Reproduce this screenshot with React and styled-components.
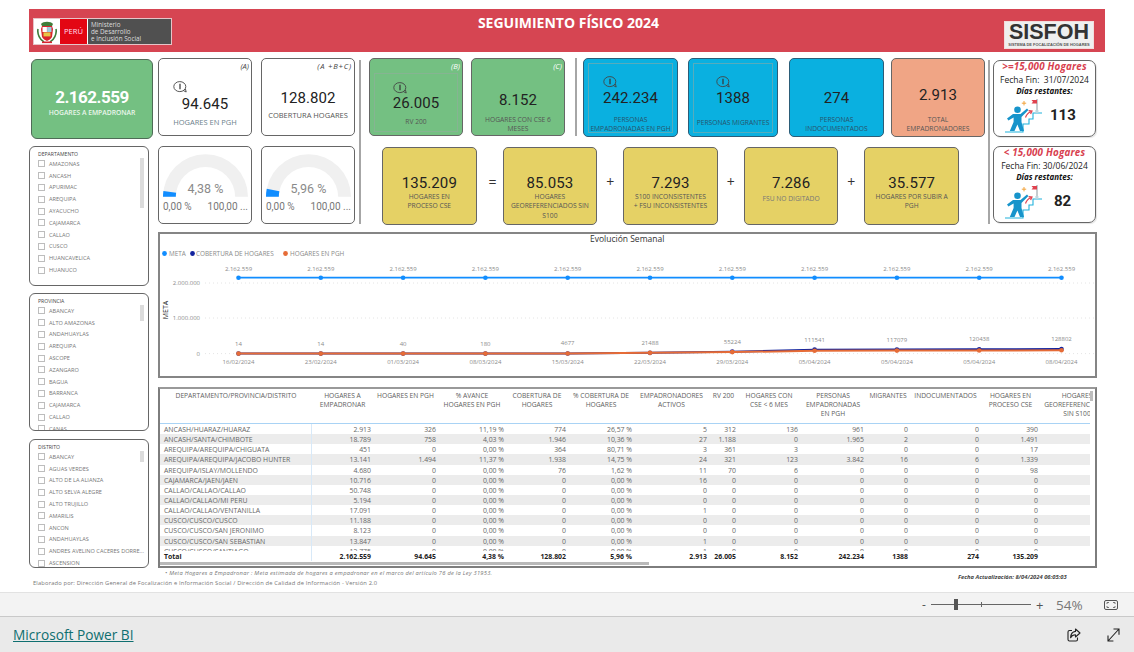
import React from "react";
import styled, { createGlobalStyle } from "styled-components";

const SANS = `"Open Sans", "Liberation Sans", sans-serif`;
const NUM = `Roboto, "Liberation Sans", sans-serif`;

const GlobalStyle = createGlobalStyle`
  html, body {
    margin: 0;
    padding: 0;
    background: #fff;
    font-family: ${SANS};
    overflow: hidden;
  }
`;

const departamentos = ["AMAZONAS", "ANCASH", "APURIMAC", "AREQUIPA", "AYACUCHO", "CAJAMARCA", "CALLAO", "CUSCO", "HUANCAVELICA", "HUANUCO"];
const provincias = ["ABANCAY", "ALTO AMAZONAS", "ANDAHUAYLAS", "AREQUIPA", "ASCOPE", "AZANGARO", "BAGUA", "BARRANCA", "CAJAMARCA", "CALLAO", "CANAS"];
const distritos = ["ABANCAY", "AGUAS VERDES", "ALTO DE LA ALIANZA", "ALTO SELVA ALEGRE", "ALTO TRUJILLO", "AMARILIS", "ANCON", "ANDAHUAYLAS", "ANDRES AVELINO CACERES DORRE...", "ASCENSION"];

const columns = [
  "DEPARTAMENTO/PROVINCIA/DISTRITO",
  "HOGARES A\nEMPADRONAR",
  "HOGARES EN PGH",
  "% AVANCE\nHOGARES EN PGH",
  "COBERTURA DE\nHOGARES",
  "% COBERTURA DE\nHOGARES",
  "EMPADRONADORES\nACTIVOS",
  "RV 200",
  "HOGARES CON\nCSE < 6 MES",
  "PERSONAS\nEMPADRONADAS\nEN PGH",
  "MIGRANTES",
  "INDOCUMENTADOS",
  "HOGARES EN\nPROCESO CSE",
  "HOGARES\nGEOREFERENCIADOS\nSIN S100",
];

const zeroRow = (name, hogares, activos) => [name, hogares, "0", "0,00 %", "0", "0,00 %", activos, "0", "0", "0", "0", "0", "0", "0"];

const rows = [
  ["ANCASH/HUARAZ/HUARAZ", "2.913", "326", "11,19 %", "774", "26,57 %", "5", "312", "136", "961", "0", "0", "390", "0"],
  ["ANCASH/SANTA/CHIMBOTE", "18.789", "758", "4,03 %", "1.946", "10,36 %", "27", "1.188", "0", "1.965", "2", "0", "1.491", "0"],
  ["AREQUIPA/AREQUIPA/CHIGUATA", "451", "0", "0,00 %", "364", "80,71 %", "3", "361", "3", "0", "0", "0", "17", "0"],
  ["AREQUIPA/AREQUIPA/JACOBO HUNTER", "13.141", "1.494", "11,37 %", "1.938", "14,75 %", "24", "321", "123", "3.842", "16", "6", "1.339", "0"],
  ["AREQUIPA/ISLAY/MOLLENDO", "4.680", "0", "0,00 %", "76", "1,62 %", "11", "70", "6", "0", "0", "0", "98", "0"],
  zeroRow("CAJAMARCA/JAEN/JAEN", "10.716", "16"),
  zeroRow("CALLAO/CALLAO/CALLAO", "50.748", "0"),
  zeroRow("CALLAO/CALLAO/MI PERU", "5.194", "0"),
  zeroRow("CALLAO/CALLAO/VENTANILLA", "17.091", "1"),
  zeroRow("CUSCO/CUSCO/CUSCO", "11.188", "0"),
  zeroRow("CUSCO/CUSCO/SAN JERONIMO", "8.123", "0"),
  zeroRow("CUSCO/CUSCO/SAN SEBASTIAN", "13.847", "1"),
  zeroRow("CUSCO/CUSCO/SANTIAGO", "12.775", "1"),
];

const totals = ["Total", "2.162.559", "94.645", "4,38 %", "128.802", "5,96 %", "2.913", "26.005", "8.152", "242.234", "1388", "274", "135.209", "85.053"];

const TRACKS = "152px 61px 65px 68px 62px 66px 75px 29px 62px 66px 44px 71px 59px 74px";

const dates = ["16/02/2024", "23/02/2024", "01/03/2024", "08/03/2024", "15/03/2024", "22/03/2024", "29/03/2024", "05/04/2024", "05/04/2024", "05/04/2024", "08/04/2024"];
const cobertura = [14, 14, 40, 180, 4677, 21488, 55224, 111541, 117079, 120438, 128802];
const pgh = [14, 14, 40, 180, 4677, 21000, 42000, 80000, 85000, 88000, 94645];
const labelY = [344, 344, 344, 344, 343, 343, 342, 340, 340, 339, 339];

const xAt = (i) => 238.5 + i * 82.3;
const yAt = (v) => 353.6 - (v / 1000000) * 35.3;
const line = (values) => values.map((v, i) => `${xAt(i)},${yAt(v)}`).join(" ");

const arc = (pct, cx, cy, outer, inner) => {
  const a = Math.PI * pct;
  const px = (r) => (cx - r * Math.cos(a)).toFixed(2);
  const py = (r) => (cy - r * Math.sin(a)).toFixed(2);
  return `M${cx - outer} ${cy} A${outer} ${outer} 0 0 1 ${px(outer)} ${py(outer)} L${px(inner)} ${py(inner)} A${inner} ${inner} 0 0 0 ${cx - inner} ${cy} Z`;
};

const InfoIcon = () => (
  <svg width="14" height="12" viewBox="0 0 14 12" fill="none">
    <ellipse cx="6.8" cy="5.6" rx="6" ry="5" stroke="#444" strokeWidth="0.9" />
    <path d="M10.4 9.6L13.2 11L12.4 7.8" stroke="#444" strokeWidth="0.9" strokeLinejoin="round" />
    <path d="M7 2.8V8.2" stroke="#333" strokeWidth="1.2" />
  </svg>
);

const CoatOfArms = () => (
  <svg width="20" height="24" viewBox="0 0 20 24">
    <path d="M4 4c2-3 10-3 12 0l-1 2H5z" fill="#3f7d3a" />
    <path d="M5 6h10l1 3-1 8c-1 2-3 3-5 4-2-1-4-2-5-4L4 9z" fill="#d9232e" />
    <rect x="5.5" y="7" width="4.4" height="5" fill="#fff" />
    <rect x="10.1" y="7" width="4.4" height="5" fill="#9ccfe0" />
    <rect x="6.5" y="12.4" width="7" height="4" fill="#e8c547" />
    <path d="M1 9c-1 5 2 11 6 13M19 9c1 5-2 11-6 13" stroke="#3f7d3a" strokeWidth="1.6" fill="none" />
    <rect x="5" y="21.5" width="10" height="1.6" fill="#d9232e" />
  </svg>
);

const GoalIcon = () => (
  <svg width="37" height="34" viewBox="0 0 37 34" fill="none">
    <path d="M0 33H18V25H24V20H28V14H37" stroke="#21b2dc" strokeWidth="1.1" />
    <path d="M32 0V13" stroke="#7f8c95" strokeWidth="0.9" />
    <rect x="30.4" y="11" width="3" height="3" fill="#bcd7e0" />
    <path d="M26.5 1H32V4.5H26.5L28 2.8Z" fill="#e0424f" />
    <path d="M19 2V6.4M16.8 4.2H21.2" stroke="#f2a33a" strokeWidth="1" />
    <path d="M20.5 18.5C21.5 15.5 23.5 13.5 26 12.5M23.6 11.6L27 12L25.6 15" stroke="#e0424f" strokeWidth="1.2" />
    <circle cx="12.5" cy="10.8" r="3.3" fill="#1794cb" />
    <path d="M2 19.5L8 15H15.5L22 9.5L23.4 11L16.5 18V23L19 32H15L12.4 25.4L9.5 32H4.8L8.6 23V18.6L3.4 21.4Z" fill="#1794cb" />
  </svg>
);

const FitIcon = () => (
  <svg width="14" height="10" viewBox="0 0 14 10" fill="none" stroke="#555" strokeWidth="1">
    <rect x="0.5" y="0.5" width="13" height="9" rx="1.5" />
    <path d="M3 4V2.5H5M9 2.5H11V4M11 6V7.5H9M5 7.5H3V6" strokeWidth="0.8" />
  </svg>
);

const ShareIcon = () => (
  <svg width="14" height="14" viewBox="0 0 14 14" fill="none" stroke="#222" strokeWidth="1.1">
    <path d="M5 2.5H2.5A1.5 1.5 0 0 0 1 4v7.5A1.5 1.5 0 0 0 2.5 13H9a1.5 1.5 0 0 0 1.5-1.5V9.5" />
    <path d="M8.5 1L13 5L8.5 9V6.8C6.2 6.8 4.6 7.7 3.6 9.8 3.7 6.5 5.6 3.7 8.5 3.4Z" strokeLinejoin="round" />
  </svg>
);

const ExpandIcon = () => (
  <svg width="13" height="14" viewBox="0 0 13 14" fill="none" stroke="#222" strokeWidth="1.1">
    <path d="M1 13L12 1M6.5 1H12V6.8M1 7.4V13H6.4" />
  </svg>
);

const Page = styled.div`
  width: 1134px;
  height: 652px;
  overflow: hidden;
  display: flex;
  flex-direction: column;
`;

const Report = styled.main`
  height: 583px;
  padding: 9px 0 0 29px;
  position: relative;
`;

const Banner = styled.header`
  width: 1076px;
  height: 43px;
  background: #d64552;
  display: grid;
  grid-template-columns: 1fr auto 1fr;
  align-items: center;
  padding: 0 11px 0 4px;
  box-sizing: border-box;
`;

const BannerTitle = styled.h1`
  margin: 0 0 16px 10px;
  color: #fff;
  font: 700 14px/16px ${SANS};
`;

const MinisterioLogo = styled.div`
  width: 139px;
  height: 27px;
  margin-top: 2px;
  display: flex;
  background: #fff;
  border: 1px solid #e6c4c8;
  box-sizing: border-box;
`;

const ArmsBox = styled.div`
  width: 26px;
  display: flex;
  align-items: center;
  justify-content: center;
`;

const PeruBox = styled.div`
  width: 27px;
  background: #e30613;
  color: #fde;
  font: 400 7.6px/25px ${SANS};
  text-align: center;
`;

const MinisterioBox = styled.div`
  flex: 1;
  margin-left: 1px;
  background: #505050;
  color: #ddd;
  font: 400 6.3px/7.2px ${SANS};
  padding: 2px 0 0 3px;
`;

const SisfohLogo = styled.div`
  justify-self: end;
  align-self: end;
  width: 90px;
  height: 28px;
  margin-bottom: 3px;
  background: #efefef;
  border: 1px solid #f3dcdc;
  box-sizing: border-box;
  text-align: center;
  color: #333;
`;

const SisfohName = styled.div`
  font: 700 21.5px/20px "Liberation Sans", sans-serif;
`;

const SisfohSub = styled.div`
  font: 700 3.9px/6px "Liberation Sans", sans-serif;
  color: #555;
`;

const Dashboard = styled.div`
  display: grid;
  grid-template-columns: 129px 939px;
  margin-top: 6px;
`;

const LeftColumn = styled.aside`
  display: flex;
  flex-direction: column;
`;

const RightColumn = styled.section`
  display: flex;
  flex-direction: column;
`;

const HeroCard = styled.div`
  width: 122px;
  height: 80px;
  margin: 1px 0 7px 2px;
  box-sizing: border-box;
  border: 1px solid #4f6b57;
  border-radius: 6px;
  background: #74c082;
  color: #fff;
  text-align: center;
  padding-top: 27px;
`;

const HeroValue = styled.div`
  font: 700 17px/20px ${NUM};
  letter-spacing: -0.5px;
`;

const HeroLabel = styled.div`
  margin-top: 1px;
  font: 600 6.75px/10px ${SANS};
  color: #eaf6ec;
`;

const Slicer = styled.div`
  width: 120px;
  height: ${(p) => p.$height}px;
  margin-bottom: ${(p) => p.$gap}px;
  box-sizing: border-box;
  border: 1px solid #666;
  border-radius: 6px;
  padding: 4px 0 0 8px;
  position: relative;
  overflow: hidden;
`;

const SlicerTitle = styled.div`
  font: 400 5.1px/7px ${SANS};
  color: #444;
`;

const SlicerList = styled.ul`
  list-style: none;
  margin: 0;
  padding: 0;
`;

const SlicerItem = styled.li`
  height: 11.8px;
  display: flex;
  align-items: center;
  gap: 4px;
  font: 400 5.6px/8px ${SANS};
  color: #777;
  white-space: nowrap;
`;

const Check = styled.span`
  width: 5px;
  height: 5px;
  border: 1px solid #bdbdbd;
  flex: none;
`;

const SlicerBar = styled.div`
  position: absolute;
  left: 110px;
  top: ${(p) => p.$top}px;
  width: 4px;
  height: ${(p) => p.$height}px;
  background: #dcdcdc;
`;

const KpiArea = styled.div`
  display: flex;
  height: 166px;
`;

const SummaryGrid = styled.div`
  display: grid;
  grid-template-columns: 94px 94px;
  grid-auto-rows: 78px;
  column-gap: 9px;
  row-gap: 10px;
`;

const Rule = styled.div`
  width: 2px;
  height: ${(p) => p.$height}px;
  margin: ${(p) => p.$margin};
  background: #a6a6a6;
  flex: none;
`;

const KpiColumn = styled.div`
  width: 616px;
  margin-left: 8px;
`;

const KpiRow = styled.div`
  display: flex;
  align-items: flex-start;
`;

const EquationRow = styled.div`
  display: flex;
  margin-top: 10px;
  padding-left: 13px;
`;

const Card = styled.div`
  position: relative;
  width: ${(p) => p.$width || 94}px;
  height: ${(p) => p.$height || 78}px;
  margin-left: ${(p) => p.$left || 0}px;
  flex: none;
  box-sizing: border-box;
  border: 1px solid ${(p) => p.$border || "#666"};
  border-radius: 5px;
  background: ${(p) => p.$bg || "#fff"};
  padding-top: ${(p) => p.$top || 0}px;
  display: flex;
  flex-direction: column;
  align-items: center;
  text-align: center;
`;

const CardValue = styled.div`
  font: 400 15px/18px ${NUM};
  color: ${(p) => p.$color || "#222"};
  letter-spacing: 0.1px;
`;

const CardLabel = styled.div`
  margin-top: ${(p) => p.$gap || 0}px;
  font: 400 ${(p) => p.$size || 6.7}px/9.3px ${SANS};
  color: ${(p) => p.$color || "#555"};
  white-space: pre-line;
`;

const Tag = styled.span`
  position: absolute;
  top: 3px;
  right: 2px;
  font: italic 400 7.6px/9px ${SANS};
  letter-spacing: ${(p) => p.$spacing || 0}px;
  color: ${(p) => p.$color || "#444"};
`;

const InfoMark = styled.span`
  position: absolute;
  left: ${(p) => p.$left}px;
  top: ${(p) => p.$top}px;
  display: flex;
`;

const Frame = styled.span`
  position: absolute;
  left: 4px;
  right: 4px;
  top: ${(p) => p.$top}px;
  bottom: 3px;
  border: 1px solid rgba(150, 170, 160, 0.55);
`;

const Operator = styled.div`
  width: 26px;
  height: 70px;
  box-sizing: border-box;
  padding-left: ${(p) => p.$shift || 0}px;
  display: flex;
  align-items: center;
  justify-content: center;
  font: 400 14px/16px ${SANS};
  color: #333;
`;

const GaugeCard = styled.div`
  box-sizing: border-box;
  border: 1px solid #666;
  border-radius: 5px;
  padding: 6px 3px 0 4px;
`;

const GaugeDial = styled.div`
  position: relative;
  height: 45px;
  display: flex;
  justify-content: center;
`;

const GaugeValue = styled.div`
  position: absolute;
  left: 0;
  right: 0;
  top: 28px;
  text-align: center;
  font: 400 12.5px/16px ${NUM};
  color: #8a8a8a;
`;

const GaugeScale = styled.div`
  display: flex;
  justify-content: space-between;
  margin-top: 2px;
  font: 400 10px/14px ${NUM};
  color: #777;
  white-space: nowrap;
`;

const DeadlineColumn = styled.div`
  display: flex;
  flex-direction: column;
  gap: 9px;
  margin: 2px 0 0 3px;
`;

const DeadlineCard = styled.div`
  width: 103px;
  height: 77px;
  box-sizing: border-box;
  border: 1px solid #666;
  border-radius: 7px;
  text-align: center;
  box-shadow: 1px 1px 1px #e3e3e3;
`;

const DeadlineTitle = styled.div`
  font: italic 700 9.8px/12px ${SANS};
  color: #d8404f;
  letter-spacing: 0.2px;
  white-space: nowrap;
`;

const DeadlineDate = styled.div`
  font: 400 8.5px/13px ${SANS};
  color: #222;
  white-space: pre;
`;

const DeadlineLeft = styled.div`
  font: italic 700 8px/10px ${SANS};
  color: #111;
`;

const DeadlineFoot = styled.div`
  display: flex;
  align-items: center;
  margin-top: 3px;
  padding-left: 11px;
`;

const DeadlineCount = styled.div`
  font: 700 15px/18px ${NUM};
  color: #222;
  margin: 0 0 2px ${(p) => p.$left}px;
`;

const ChartPanel = styled.figure`
  margin: 8px 0 0;
  height: 146px;
  box-sizing: border-box;
  border: 2px solid #858585;
  display: flex;
`;

const ChartText = styled.text`
  font-family: ${SANS};
  font-size: ${(p) => p.$size || 6}px;
  fill: ${(p) => p.$fill || "#8a8a8a"};
`;

const TablePanel = styled.div`
  margin-top: 9px;
  height: 181px;
  box-sizing: border-box;
  border: 2px solid #7d7d7d;
  border-top-color: #999;
  position: relative;
`;

const TableClip = styled.div`
  width: 930px;
  height: 177px;
  overflow: hidden;
`;

const HeadRow = styled.div`
  display: grid;
  grid-template-columns: ${TRACKS};
  width: 954px;
  height: 34px;
  box-sizing: content-box;
  border-bottom: 1px solid #a9d3f5;
`;

const HeadCell = styled.div`
  padding-top: 1.5px;
  text-align: center;
  font: 400 6.7px/9.4px ${SANS};
  color: #606060;
  white-space: pre;
`;

const TableBody = styled.div`
  height: 127px;
  overflow: hidden;
`;

const DataRow = styled.div`
  display: grid;
  grid-template-columns: ${TRACKS};
  width: 954px;
  height: 10.15px;
  background: ${(p) => (p.$striped ? "#ececec" : "#fff")};
`;

const DataCell = styled.div`
  text-align: ${(p) => (p.$first ? "left" : "right")};
  padding: ${(p) => (p.$first ? "0 0 0 4px" : "0 2px 0 0")};
  font: ${(p) => (p.$bold ? 700 : 400)} 6.9px/11px ${SANS};
  color: ${(p) => (p.$bold ? "#222" : "#666")};
  white-space: nowrap;
  overflow: hidden;
  border-right: ${(p) => (p.$first ? "1px solid #d8e9f8" : "0")};
`;

const VerticalThumb = styled.div`
  position: absolute;
  top: 2px;
  left: 930px;
  width: 3px;
  height: 10px;
  background: #bdbdbd;
`;

const HorizontalThumb = styled.div`
  position: absolute;
  left: 0;
  top: 173px;
  width: 489px;
  height: 3px;
  background: #b9b9b9;
`;

const FootRow = styled.div`
  display: flex;
  align-items: flex-start;
`;

const NoteColumn = styled.div`
  width: 925px;
`;

const Note = styled.div`
  margin-left: ${(p) => p.$left}px;
  margin-top: ${(p) => p.$top}px;
  font: ${(p) => (p.$italic ? "italic" : "normal")} 400 5.75px/8px ${SANS};
  letter-spacing: ${(p) => p.$spacing}px;
  color: #777;
  white-space: nowrap;
`;

const Updated = styled.div`
  margin: 5px 0 0 4px;
  font: italic 700 5.8px/8px ${SANS};
  color: #444;
  white-space: nowrap;
`;

const ZoomBar = styled.div`
  height: 23px;
  flex: none;
  background: #f3f3f3;
  border-top: 1px solid #e2e2e2;
  border-bottom: 1px solid #c9c9c9;
  box-sizing: content-box;
  display: flex;
  align-items: center;
  padding-left: 922px;
`;

const ZoomSign = styled.span`
  width: ${(p) => p.$width}px;
  font: 400 ${(p) => p.$size}px/20px ${SANS};
  color: #555;
`;

const ZoomTrack = styled.div`
  position: relative;
  width: 100px;
  height: 1px;
  margin: 0 5px;
  background: #666;
`;

const ZoomThumb = styled.span`
  position: absolute;
  left: 23px;
  top: -5px;
  width: 4px;
  height: 11px;
  background: #555;
`;

const ZoomTick = styled.span`
  position: absolute;
  left: 50px;
  top: -2px;
  width: 1px;
  height: 5px;
  background: #666;
`;

const ZoomValue = styled.span`
  width: 48px;
  margin-left: 11px;
  font: 400 13.5px/20px ${SANS};
  color: #777;
`;

const BottomBar = styled.footer`
  flex: 1;
  background: #eaeaea;
  display: flex;
  align-items: center;
  padding: 0 14px 0 13px;
  gap: 26px;
`;

const PowerBiLink = styled.a`
  margin-right: auto;
  font: 400 13.7px/20px ${SANS};
  color: #0f6f70;
  text-decoration: underline;
`;

const Logo = () => (
  <MinisterioLogo>
    <ArmsBox>
      <CoatOfArms />
    </ArmsBox>
    <PeruBox>PERÚ</PeruBox>
    <MinisterioBox>
      Ministerio
      <br />
      de Desarrollo
      <br />e Inclusión Social
    </MinisterioBox>
  </MinisterioLogo>
);

const SlicerBox = ({ title, items, height, gap, barTop, barHeight }) => (
  <Slicer $height={height} $gap={gap}>
    <SlicerTitle>{title}</SlicerTitle>
    <SlicerList>
      {items.map((item, i) => (
        <SlicerItem key={i}>
          <Check />
          {item}
        </SlicerItem>
      ))}
    </SlicerList>
    <SlicerBar $top={barTop} $height={barHeight} />
  </Slicer>
);

const Gauge = ({ pct, value }) => (
  <GaugeCard>
    <GaugeDial>
      <svg width="86" height="45" viewBox="0 0 86 45">
        <path d={arc(1, 43, 44, 43, 30)} fill="#f0f0f0" />
        <path d={arc(pct, 43, 44, 43, 30)} fill="#118dff" />
      </svg>
      <GaugeValue>{value}</GaugeValue>
    </GaugeDial>
    <GaugeScale>
      <span>0,00 %</span>
      <span>100,00 ...</span>
    </GaugeScale>
  </GaugeCard>
);

const Deadline = ({ title, date, count, countLeft }) => (
  <DeadlineCard>
    <DeadlineTitle>{title}</DeadlineTitle>
    <DeadlineDate>{date}</DeadlineDate>
    <DeadlineLeft>Días restantes:</DeadlineLeft>
    <DeadlineFoot>
      <GoalIcon />
      <DeadlineCount $left={countLeft}>{count}</DeadlineCount>
    </DeadlineFoot>
  </DeadlineCard>
);

const Chart = () => (
  <svg width="935" height="142" viewBox="160 234 935 142">
    <ChartText x="590" y="241.5" $size={8.5} $fill="#333">Evolución Semanal</ChartText>
    <circle cx="164.5" cy="253.5" r="2.4" fill="#118dff" />
    <ChartText x="169" y="255.5" $size={6.4}>META</ChartText>
    <circle cx="192.5" cy="253.5" r="2.4" fill="#12239e" />
    <ChartText x="196" y="255.5" $size={6.4}>COBERTURA DE HOGARES</ChartText>
    <circle cx="285.5" cy="253.5" r="2.4" fill="#e66c37" />
    <ChartText x="290" y="255.5" $size={6.4}>HOGARES EN PGH</ChartText>

    {[283, 318, 353.6].map((y) => (
      <line key={y} x1="205" x2="1094" y1={y} y2={y} stroke="#ddd" strokeWidth="0.8" strokeDasharray="1 3" />
    ))}
    <ChartText x="200" y="285" textAnchor="end">2.000.000</ChartText>
    <ChartText x="200" y="320" textAnchor="end">1.000.000</ChartText>
    <ChartText x="200" y="356" textAnchor="end">0</ChartText>
    <ChartText x="0" y="0" $size={7} $fill="#222" textAnchor="middle" transform="translate(168 310) rotate(-90)">META</ChartText>

    <polyline points={dates.map((_, i) => `${xAt(i)},277.7`).join(" ")} fill="none" stroke="#118dff" strokeWidth="1.7" />
    {dates.map((d, i) => (
      <g key={i}>
        <circle cx={xAt(i)} cy="277.7" r="2.3" fill="#118dff" />
        <ChartText x={xAt(i)} y="270.6" textAnchor="middle">2.162.559</ChartText>
        <ChartText x={xAt(i)} y={labelY[i] + 2} textAnchor="middle">{cobertura[i]}</ChartText>
        <ChartText x={xAt(i)} y="364" textAnchor="middle">{d}</ChartText>
      </g>
    ))}

    <polyline points={line(cobertura)} fill="none" stroke="#12239e" strokeWidth="2" />
    {cobertura.map((v, i) => (
      <circle key={i} cx={xAt(i)} cy={yAt(v)} r="2.3" fill="#12239e" />
    ))}
    <polyline points={line(pgh)} fill="none" stroke="#e66c37" strokeWidth="2" />
    {pgh.map((v, i) => (
      <circle key={i} cx={xAt(i)} cy={yAt(v)} r="2.3" fill="#e66c37" />
    ))}
  </svg>
);

const DataTable = () => (
  <TablePanel>
    <TableClip>
      <HeadRow>
        {columns.map((c) => (
          <HeadCell key={c}>{c}</HeadCell>
        ))}
      </HeadRow>
      <TableBody>
        {rows.map((row, r) => (
          <DataRow key={r} $striped={r % 2 === 1}>
            {row.map((cell, c) => (
              <DataCell key={c} $first={c === 0}>
                {cell}
              </DataCell>
            ))}
          </DataRow>
        ))}
      </TableBody>
      <DataRow>
        {totals.map((cell, c) => (
          <DataCell key={c} $first={c === 0} $bold>
            {cell}
          </DataCell>
        ))}
      </DataRow>
    </TableClip>
    <VerticalThumb />
    <HorizontalThumb />
  </TablePanel>
);

const App = () => {
  return (
    <Page>
      <GlobalStyle />
      <Report>
        <Banner>
          <Logo />
          <BannerTitle>SEGUIMIENTO FÍSICO 2024</BannerTitle>
          <SisfohLogo>
            <SisfohName>SISFOH</SisfohName>
            <SisfohSub>SISTEMA DE FOCALIZACIÓN DE HOGARES</SisfohSub>
          </SisfohLogo>
        </Banner>

        <Dashboard>
          <LeftColumn>
            <HeroCard>
              <HeroValue>2.162.559</HeroValue>
              <HeroLabel>HOGARES A EMPADRONAR</HeroLabel>
            </HeroCard>
            <SlicerBox title="DEPARTAMENTO" items={departamentos} height={140} gap={7} barTop={11} barHeight={50} />
            <SlicerBox title="PROVINCIA" items={provincias} height={138} gap={8} barTop={11} barHeight={16} />
            <SlicerBox title="DISTRITO" items={distritos} height={129} gap={0} barTop={11} barHeight={11} />
          </LeftColumn>

          <RightColumn>
            <KpiArea>
              <SummaryGrid>
                <Card $top={36}>
                  <Tag>(A)</Tag>
                  <InfoMark $left={14} $top={22}><InfoIcon /></InfoMark>
                  <CardValue>94.645</CardValue>
                  <CardLabel $gap={5} $size={7.5} $color="#6d7f8c">HOGARES EN PGH</CardLabel>
                </Card>
                <Card $top={30}>
                  <Tag $spacing={0.8}>(A +B+C)</Tag>
                  <CardValue>128.802</CardValue>
                  <CardLabel $gap={4} $size={7.5}>COBERTURA HOGARES</CardLabel>
                </Card>
                <Gauge pct={0.0438} value="4,38 %" />
                <Gauge pct={0.0596} value="5,96 %" />
              </SummaryGrid>

              <Rule $height={164} $margin="2px 0 0 4px" />

              <KpiColumn>
                <KpiRow>
                  <Card $bg="#74c082" $top={35}>
                    <Frame $top={14} />
                    <Tag $color="#fff">(B)</Tag>
                    <InfoMark $left={23} $top={23}><InfoIcon /></InfoMark>
                    <CardValue>26.005</CardValue>
                    <CardLabel $gap={5}>RV 200</CardLabel>
                  </Card>
                  <Card $bg="#74c082" $left={8} $top={32}>
                    <Tag $color="#fff">(C)</Tag>
                    <CardValue>8.152</CardValue>
                    <CardLabel $gap={6}>{"HOGARES CON CSE 6\nMESES"}</CardLabel>
                  </Card>
                  <Rule $height={78} $margin="0 6px 0 10px" />
                  <Card $bg="#0ab0e0" $border="#2b5d78" $width={95} $height={79} $top={30}>
                    <Frame $top={4} />
                    <InfoMark $left={19} $top={17}><InfoIcon /></InfoMark>
                    <CardValue>242.234</CardValue>
                    <CardLabel $gap={8} $color="#27536b">{"PERSONAS\nEMPADRONADAS EN PGH"}</CardLabel>
                  </Card>
                  <Card $bg="#0ab0e0" $border="#2b5d78" $width={90} $height={79} $left={10} $top={30}>
                    <Frame $top={4} />
                    <InfoMark $left={27} $top={17}><InfoIcon /></InfoMark>
                    <CardValue>1388</CardValue>
                    <CardLabel $gap={11} $color="#27536b">PERSONAS MIGRANTES</CardLabel>
                  </Card>
                  <Card $bg="#0ab0e0" $border="#2b5d78" $width={95} $height={79} $left={11} $top={30}>
                    <CardValue>274</CardValue>
                    <CardLabel $gap={8} $color="#27536b">{"PERSONAS\nINDOCUMENTADOS"}</CardLabel>
                  </Card>
                  <Card $bg="#f0a585" $left={7} $height={79} $top={27}>
                    <CardValue>2.913</CardValue>
                    <CardLabel $gap={11}>{"TOTAL\nEMPADRONADORES"}</CardLabel>
                  </Card>
                </KpiRow>

                <EquationRow>
                  <Card $bg="#e5d165" $width={94.6} $top={26}>
                    <CardValue>135.209</CardValue>
                    <CardLabel>{"HOGARES EN\nPROCESO CSE"}</CardLabel>
                  </Card>
                  <Operator $shift={6}>=</Operator>
                  <Card $bg="#e5d165" $width={94.6} $top={26}>
                    <CardValue>85.053</CardValue>
                    <CardLabel>{"HOGARES\nGEOREFERENCIADOS SIN\nS100"}</CardLabel>
                  </Card>
                  <Operator>+</Operator>
                  <Card $bg="#e5d165" $width={94.6} $top={26}>
                    <CardValue>7.293</CardValue>
                    <CardLabel>{"S100 INCONSISTENTES\n+ FSU INCONSISTENTES"}</CardLabel>
                  </Card>
                  <Operator>+</Operator>
                  <Card $bg="#e5d165" $width={94.6} $top={26}>
                    <CardValue>7.286</CardValue>
                    <CardLabel $gap={2} $color="#777">FSU NO DIGITADO</CardLabel>
                  </Card>
                  <Operator>+</Operator>
                  <Card $bg="#e5d165" $width={94.6} $top={26}>
                    <CardValue>35.577</CardValue>
                    <CardLabel>{"HOGARES POR SUBIR A\nPGH"}</CardLabel>
                  </Card>
                </EquationRow>
              </KpiColumn>

              <Rule $height={164} $margin="2px 0 0 3px" />

              <DeadlineColumn>
                <Deadline title=">=15,000 Hogares" date="Fecha Fin:  31/07/2024" count="113" countLeft={8} />
                <Deadline title="< 15,000 Hogares" date="Fecha Fin: 30/06/2024" count="82" countLeft={12} />
              </DeadlineColumn>
            </KpiArea>

            <ChartPanel>
              <Chart />
            </ChartPanel>

            <DataTable />
          </RightColumn>
        </Dashboard>

        <FootRow>
          <NoteColumn>
            <Note $italic $left={136} $top={1} $spacing={0.25}>
              • Meta Hogares a Empadronar : Meta estimada de hogares a empadronar en el marco del artículo 76 de la Ley 31953.
            </Note>
            <Note $left={4} $top={2} $spacing={0.17}>
              Elaborado por: Dirección General de Focalización e Información Social / Dirección de Calidad de Información - Versión 2.0
            </Note>
          </NoteColumn>
          <Updated>Fecha Actualización: 8/04/2024 06:05:03</Updated>
        </FootRow>
      </Report>

      <ZoomBar>
        <ZoomSign $width={4} $size={12}>-</ZoomSign>
        <ZoomTrack>
          <ZoomThumb />
          <ZoomTick />
        </ZoomTrack>
        <ZoomSign $width={9} $size={13}>+</ZoomSign>
        <ZoomValue>54%</ZoomValue>
        <FitIcon />
      </ZoomBar>

      <BottomBar>
        <PowerBiLink>Microsoft Power BI</PowerBiLink>
        <ShareIcon />
        <ExpandIcon />
      </BottomBar>
    </Page>
  );
};

export default App;
